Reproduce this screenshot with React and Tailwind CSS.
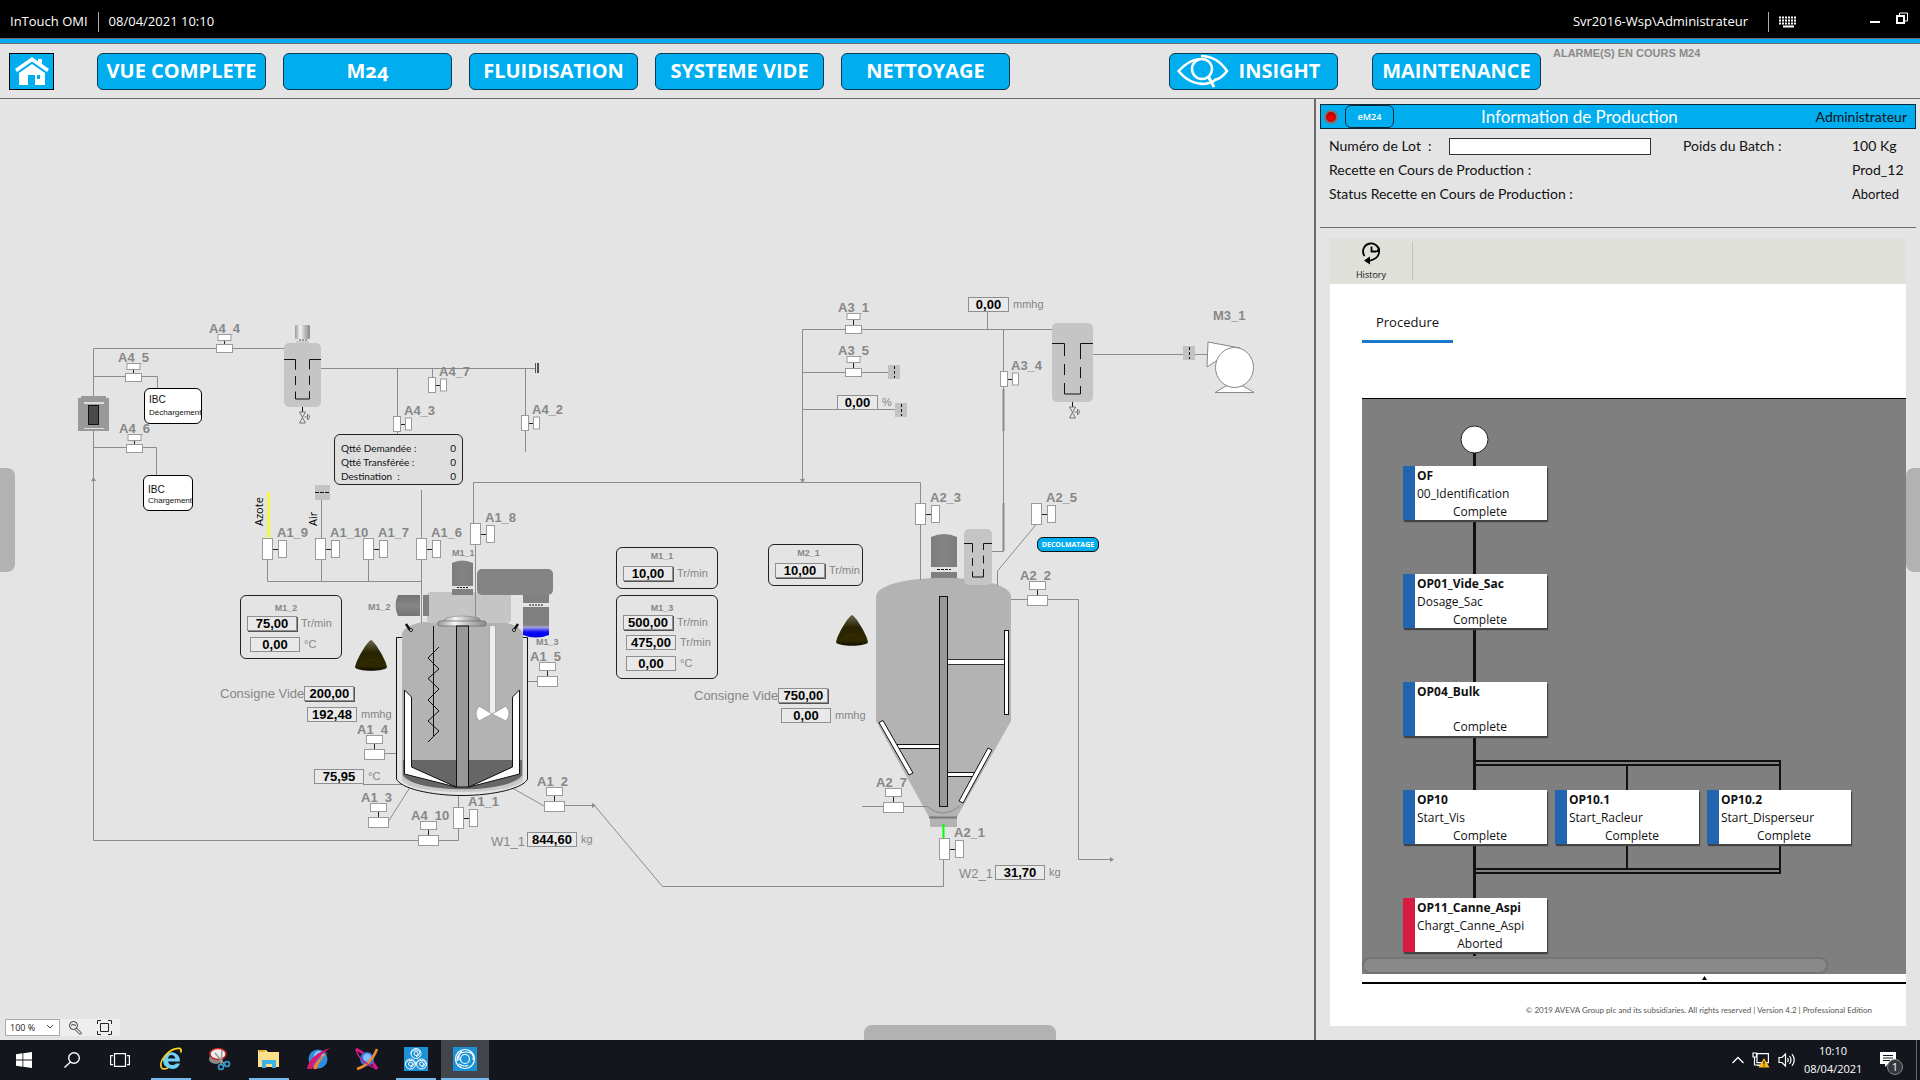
import React, { useState } from 'react';

const navItems = ['VUE COMPLETE', 'M24', 'FLUIDISATION', 'SYSTEME VIDE', 'NETTOYAGE'];

// Horizontal valves: body with the actuator above it
const topValves = [
  { tag: 'A4_4', x: 216, y: 344, small: true },
  { tag: 'A4_5', x: 125, y: 373, small: true },
  { tag: 'A4_6', x: 126, y: 444, small: true },
  { tag: 'A3_1', x: 845, y: 325, small: true, rise: 12 },
  { tag: 'A3_5', x: 845, y: 368, small: true, rise: 12 },
  { tag: 'A1_5', x: 537, y: 676 },
  { tag: 'A1_4', x: 364, y: 749 },
  { tag: 'A1_3', x: 368, y: 817 },
  { tag: 'A4_10', x: 418, y: 835 },
  { tag: 'A1_2', x: 544, y: 801 },
  { tag: 'A2_2', x: 1027, y: 595 },
  { tag: 'A2_7', x: 883, y: 802 },
];

// Vertical valves: body with the actuator on its right
const sideValves = [
  { tag: 'A4_7', x: 428, y: 377, small: true },
  { tag: 'A4_3', x: 393, y: 416, small: true },
  { tag: 'A4_2', x: 521, y: 415, small: true },
  { tag: 'A3_4', x: 1000, y: 371, small: true },
  { tag: 'A1_9', x: 262, y: 538 },
  { tag: 'A1_10', x: 315, y: 538 },
  { tag: 'A1_7', x: 363, y: 538 },
  { tag: 'A1_6', x: 416, y: 538 },
  { tag: 'A1_8', x: 470, y: 523 },
  { tag: 'A1_1', x: 453, y: 807 },
  { tag: 'A2_3', x: 915, y: 503 },
  { tag: 'A2_5', x: 1031, y: 503 },
  { tag: 'A2_1', x: 939, y: 838 },
];

const steps = [
  { id: 'OF', name: '00_Identification', status: 'Complete', pos: 'left-[41px] top-[67px]' },
  { id: 'OP01_Vide_Sac', name: 'Dosage_Sac', status: 'Complete', pos: 'left-[41px] top-[175px]' },
  { id: 'OP04_Bulk', name: '', status: 'Complete', pos: 'left-[41px] top-[283px]' },
  { id: 'OP10', name: 'Start_Vis', status: 'Complete', pos: 'left-[41px] top-[391px]' },
  { id: 'OP10.1', name: 'Start_Racleur', status: 'Complete', pos: 'left-[193px] top-[391px]' },
  { id: 'OP10.2', name: 'Start_Disperseur', status: 'Complete', pos: 'left-[345px] top-[391px]' },
  { id: 'OP11_Canne_Aspi', name: 'Chargt_Canne_Aspi', status: 'Aborted', pos: 'left-[41px] top-[499px]' },
];

const Tag = ({ x, y, size = 13, children }) => (
  <text x={x} y={y} fontSize={size} fontWeight="bold" fill="#878787">{children}</text>
);

const TopValve = ({ tag, x, y, small, rise }) => {
  const w = small ? 16 : 20;
  const h = small ? 8 : 10;
  const aw = small ? 13 : 16;
  const ah = small ? 6 : 8;
  const ay = y - (rise || (small ? 10 : 14));
  return (
    <g>
      <Tag x={x - 7} y={ay - 1}>{tag}</Tag>
      <g fill="#fff" stroke="#9a9a9a">
        <rect x={x + 0.5} y={y + 0.5} width={w} height={h} />
        <rect x={x + (w - aw) / 2 + 0.5} y={ay + 0.5} width={aw} height={ah} />
        <path d={`M${x + w / 2 + 0.5} ${ay + ah + 1}V${y}`} stroke="#222" />
      </g>
    </g>
  );
};

const SideValve = ({ tag, x, y, small }) => {
  const w = small ? 7 : 10;
  const h = small ? 15 : 21;
  const aw = small ? 6 : 8;
  const ah = small ? 12 : 17;
  const ax = small ? x + 12 : x + 16;
  return (
    <g>
      <Tag x={small ? x + 11 : x + 15} y={y - 1}>{tag}</Tag>
      <g fill="#fff" stroke="#9a9a9a">
        <rect x={x + 0.5} y={y + 0.5} width={w} height={h} />
        <rect x={ax + 0.5} y={y + (h - ah) / 2 + 0.5} width={aw} height={ah} />
        <path d={`M${x + w + 1} ${y + Math.round(h / 2) + 0.5}H${ax}`} stroke="#222" />
      </g>
    </g>
  );
};

// Filter housing with its dashed cartridge
const Filter = ({ x, y, w, h, top, inset }) => (
  <g>
    <rect x={x} y={y} width={w} height={h} rx="5" fill="#c5c5c5" />
    <path
      d={`M${x} ${y + top}H${x + inset}V${y + h - 8}H${x + w - inset}V${y + top}H${x + w}`}
      fill="none"
      stroke="#111"
      strokeDasharray={`${inset + h * 0.16} ${h * 0.1} ${h * 0.14} ${h * 0.1} ${h * 0.12 + w - inset * 2 + h * 0.12} ${h * 0.1} ${h * 0.14} ${h * 0.1} 100`}
    />
  </g>
);

const DrainValve = ({ x, y }) => (
  <g fill="none" stroke="#777">
    <path d={`M${x} ${y}v5`} stroke="#111" />
    <path d={`M${x - 3} ${y + 5}h6l-6 11h6l-6 -11M${x + 2} ${y + 10}h3`} />
    <path d={`M${x + 5} ${y + 7}q4 3 0 6z`} />
  </g>
);

const AlarmCone = ({ x, y }) => (
  <g transform={`translate(${x} ${y})`}>
    <path d="M16 0C20 2 30 18 32 27C31 32 1 32 0 27C2 18 12 2 16 0Z" fill="url(#cone)" />
    <path d="M8 23l8-4 8 4" fill="none" stroke="#554a10" strokeDasharray="1 2" />
  </g>
);

const Orifice = ({ x, y }) => (
  <g>
    <rect x={x} y={y} width="12" height="14" fill="#c2c2c2" />
    <path d={`M${x + 6.5} ${y + 1}v12`} stroke="#111" strokeDasharray="3 2" />
  </g>
);

const Pipes = () => (
  <g fill="none" stroke="#8c8c8c">
    <path d="M93.5 397V348.5H284M93.5 376.5H157.5V388M93.5 428V840.5H458.5V829M93.5 447.5H156.5V475" />
    <path d="M321 368.5H535M397.5 368V434M432.5 368V377M525.5 368V452M421.5 490V623M267.5 559V581.5H421.5M321.5 500V581M368.5 559V581" />
    <path d="M473.5 524V482.5H920.5V582M475.5 545V618" />
    <path d="M802.5 482V329.5H1053M802.5 372.5H890M802.5 409.5H897M987.5 312V329M1003.5 329V551.5H991M1091 354.5H1209" />
    <path d="M1036.5 524L997.5 571V586M1011 599.5H1078.5V859.5H1112M862 806.5H905" />
    <path d="M943.5 859V886.5H662.5L594.5 805.5H564M544 806L507 785M388 822L412 784M363 784.5H412M528 681.5H537M385 753.5H397M458.5 796V808" />
    <path d="M1003.5 389V431M1003.5 503V551" strokeWidth="2" />
    <path d="M268.5 492V538" stroke="#ffff00" strokeWidth="2" />
    <path d="M91 481l2.500-4 2.500 4zM800 479h5l-2.500 4zM592 803l4 2.500-4 2.500zM1110 857l4 2.500-4 2.500z" fill="#8c8c8c" stroke="none" />
  </g>
);

const MixerTank = () => (
  <g>
    {/* jacket */}
    <path d="M404 637.500H396.500V779C400 788 430 795.500 462 795.500C494 795.500 524 788 527.500 779V637.500H521" fill="#e4e4e4" stroke="#111" />
    <path d="M402 780V634C404 627 414 623 426 622H498C511 623 521 627 523 634V780C515 796 409 796 402 780Z" fill="#c9c9c9" />
    <path d="M402 776V634C404 627 414 623 426 622H498C511 623 521 627 523 634V776C510 793 414 793 402 776Z" fill="#b3b3b3" />
    <path d="M403 760H522V775C511 794 414 794 403 775Z" fill="#666" />
    {/* gearbox and motors */}
    <rect x="427" y="592" width="84" height="31" rx="4" fill="#c5c5c5" />
    <path d="M452 586V563Q462 558 473 563V586Z" fill="url(#motor)" />
    <path d="M452 589h21v6h-21zM423 595h6v21h-6zM523 595h26v8h-26z" fill="#808080" />
    <path d="M420 595H398Q393 605 398 616H420Z" fill="url(#motorSide)" />
    <rect x="477" y="569" width="76" height="26" rx="5" fill="#848484" />
    <path d="M523 607h26v28q-13 5-26 0z" fill="url(#blueMotor)" />
    <path d="M457 587.500h11M421.500 599v13M529 605h14" stroke="#111" strokeDasharray="2 1" />
    <path d="M421.500 590V623M475.500 560V618" stroke="#8c8c8c" fill="none" />
    {/* lid */}
    <path d="M446 618Q462 614 479 618L482 623H441Z" fill="url(#steel)" stroke="#777" strokeWidth=".5" />
    <rect x="438" y="621" width="48" height="5" rx="2" fill="url(#steel)" stroke="#666" strokeWidth=".7" />
    <path d="M406 624l4 6M518 624l-4 6" stroke="#111" strokeWidth="2.500" />
    <circle cx="411" cy="630" r="1.500" fill="#eee" stroke="#111" />
    <circle cx="514" cy="630" r="1.500" fill="#eee" stroke="#111" />
    {/* shafts, screw, disperser */}
    <path d="M433.500 626V737" stroke="#111" />
    <path d="M439 647L428 658L439 669L428 678.500L439 689L428 700L439 711L428 721L439 731L428 742" fill="none" stroke="#111" />
    <rect x="489.500" y="625.500" width="6" height="88" fill="#eee" stroke="#aaa" />
    <path d="M492 714L479 706Q473 714 479 721L492 714L506 706Q512 714 506 721Z" fill="#fff" stroke="#999" strokeWidth=".8" />
    <rect x="456.500" y="626" width="12" height="161" fill="#989898" stroke="#111" />
    {/* anchor blades */}
    <path d="M404.500 690L411.500 697V767L456 787L404.500 774ZM519.500 690L512.500 697V767L469 787L519.500 774Z" fill="#fff" stroke="#111" />
  </g>
);

const StorageTank = () => (
  <g>
    <path d="M931 567V537Q944 531 957 537V567Z" fill="url(#motor)" />
    <rect x="931" y="572" width="26" height="8" fill="#808080" />
    <path d="M937 569.500h14" stroke="#111" strokeDasharray="3 1" />
    <path d="M876 721V596C878 585 905 578 944 578C983 578 1009 585 1011 596V721L957 817H929Z" fill="#b3b3b3" />
    <rect x="930" y="817" width="27" height="10" fill="#b3b3b3" />
    <path d="M929 817.500h28" stroke="#777" strokeWidth="2" />
    <path d="M905 806.500H927Q943 820 960 806" fill="none" stroke="#8c8c8c" />
    <path d="M997.500 571V586M920.500 565V580" stroke="#8c8c8c" />
    <Filter x={964} y={529} w={28} h={56} top={14.500} inset={8.500} />
    <rect x="947.500" y="659.500" width="57" height="5" fill="#fff" stroke="#333" />
    <rect x="1004.500" y="630.500" width="4" height="84" fill="#fff" stroke="#111" />
    <rect x="897.500" y="744.500" width="43" height="4" fill="#fff" stroke="#111" />
    <rect x="947.500" y="772.500" width="27" height="4" fill="#fff" stroke="#111" />
    <path d="M879 722.500L883 720.500L913 773L909 775ZM988 748L992 750L963 803L959 801Z" fill="#fff" stroke="#111" />
    <rect x="939.500" y="596.500" width="8" height="210" fill="#999" stroke="#111" />
    <path d="M943.500 824V838" stroke="#00ff00" strokeWidth="2" />
  </g>
);

const Drawing = () => (
  <svg viewBox="0 99 1280 820" className="block h-[820px] w-[1280px] font-['Liberation_Sans',Arial,sans-serif]">
    <defs>
      <linearGradient id="motor">
        <stop offset="0" stopColor="#7c7c7c" />
        <stop offset=".5" stopColor="#848484" />
        <stop offset="1" stopColor="#7c7c7c" />
      </linearGradient>
      <linearGradient id="motorSide" x2="0" y2="1">
        <stop offset="0" stopColor="#747474" />
        <stop offset=".5" stopColor="#858585" />
        <stop offset="1" stopColor="#747474" />
      </linearGradient>
      <linearGradient id="blueMotor" x2="0" y2="1">
        <stop offset=".6" stopColor="#808080" />
        <stop offset=".66" stopColor="#a8a8e0" />
        <stop offset=".82" stopColor="#0a0aff" />
        <stop offset="1" stopColor="#0000e0" />
      </linearGradient>
      <linearGradient id="steel">
        <stop offset="0" stopColor="#9a9a9a" />
        <stop offset=".35" stopColor="#f4f4f4" />
        <stop offset=".6" stopColor="#c4c4c4" />
        <stop offset="1" stopColor="#8a8a8a" />
      </linearGradient>
      <linearGradient id="cone" x2="0" y2="1">
        <stop offset="0" stopColor="#6b6550" />
        <stop offset=".4" stopColor="#2a2402" />
        <stop offset=".85" stopColor="#2f2800" />
        <stop offset="1" stopColor="#0d0b00" />
      </linearGradient>
    </defs>

    <Pipes />
    <MixerTank />
    <StorageTank />

    {/* bag loading station */}
    <path d="M78 398h3v-2h25v2h3v33H78z" fill="#999" />
    <path d="M84 402h20v2H84zM84 428h20v1H84z" fill="#ddd" />
    <rect x="88.500" y="405.500" width="10" height="19" fill="#4a4a4a" stroke="#111" />

    <rect x="295" y="325" width="15" height="14" rx="1" fill="url(#steel)" />
    <rect x="296" y="341" width="13" height="3" fill="#ccc" />
    <path d="M299 340h8" stroke="#555" strokeDasharray="2 1" />
    <Filter x={284} y={343} w={37} h={64} top={16.500} inset={11.500} />
    <DrainValve x={302.500} y={407} />
    <Filter x={1052} y={323} w={41} h={79} top={20.500} inset={12.500} />
    <DrainValve x={1072.500} y={402} />
    <path d="M535 363h1v10h-1zM537 363h2v10h-2z" fill="#555" />

    <rect x="315" y="485" width="15" height="15" fill="#c2c2c2" />
    <path d="M315 492.500h15" stroke="#111" strokeDasharray="4 1" />
    <Orifice x={888} y={365} />
    <Orifice x={895} y={403} />
    <Orifice x={1183} y={346} />

    {/* vacuum pump */}
    <path d="M1208 342L1240 348L1216 361L1207 367Z" fill="#fff" stroke="#888" />
    <path d="M1215 392.500L1226 386H1243L1254 392.500Z" fill="#fff" stroke="#888" />
    <ellipse cx="1234.500" cy="367.500" rx="19" ry="20" fill="#fff" stroke="#888" />

    <AlarmCone x={355} y={640} />
    <AlarmCone x={836} y={615} />

    {topValves.map((valve) => (
      <TopValve key={valve.tag} {...valve} />
    ))}
    {sideValves.map((valve) => (
      <SideValve key={valve.tag} {...valve} />
    ))}

    <Tag x={1213} y={320}>M3_1</Tag>
    <Tag x={452} y={556} size={9}>M1_1</Tag>
    <Tag x={368} y={610} size={9}>M1_2</Tag>
    <Tag x={536} y={645} size={9}>M1_3</Tag>
    <text x="525" y="846" textAnchor="end" fontSize="13" fill="#878787">W1_1</text>
    <text x="993" y="878" textAnchor="end" fontSize="13" fill="#878787">W2_1</text>
    <text transform="translate(263 526) rotate(-90)" fontSize="11" fontFamily="Open Sans, sans-serif">Azote</text>
    <text transform="translate(317 526) rotate(-90)" fontSize="11" fontFamily="Open Sans, sans-serif">Air</text>
  </svg>
);

const unitClass = 'text-[11px] leading-none text-[#858585]';

// Read-only measurement
const Reading = ({ value, unit, width = 'w-[50px]' }) => (
  <div className="flex items-center gap-1">
    <output className={`${width} h-[15px] border border-[#8f8f8f] bg-[#e9e9e9] text-center text-[13px] leading-[13px] font-bold text-black`}>
      {value}
    </output>
    <span className={unitClass}>{unit}</span>
  </div>
);

// Operator set point
const Setpoint = ({ label, initial, unit }) => {
  const [value, setValue] = useState(initial);
  return (
    <div className="flex items-center gap-1">
      <input
        aria-label={label}
        value={value}
        onChange={(e) => setValue(e.target.value)}
        className="h-[15px] w-[50px] border border-[#8f8f8f] bg-[#e9e9e9] text-center text-[13px] leading-[13px] font-bold text-black shadow-[1px_1px_0_#555]"
      />
      {unit && <span className={unitClass}>{unit}</span>}
    </div>
  );
};

const Panel = ({ title, className, children }) => (
  <section className={`absolute flex flex-col rounded-md border border-[#222] ${className}`}>
    <h3 className="text-center text-[9px] leading-3 font-bold text-[#878787]">{title}</h3>
    {children}
  </section>
);

const Synoptic = () => {
  const [zoom, setZoom] = useState('100 %');
  return (
    <main className="relative min-w-0 flex-1 overflow-hidden border-r-2 border-[#6c6b70] font-['Liberation_Sans',Arial,sans-serif]">
      <Drawing />

      <button className="absolute top-[289px] left-[144px] h-9 w-[58px] rounded-md border border-black bg-white pl-1 text-left text-[8px] leading-[13px]">
        <span className="block text-[10px]">IBC</span>
        Déchargement
      </button>
      <button className="absolute top-[376px] left-[143px] h-9 w-[50px] rounded-md border border-black bg-white pl-1 text-left text-[8px] leading-[11px]">
        <span className="block pt-1 text-[10px]">IBC</span>
        Chargement
      </button>

      <dl className="absolute top-[335px] left-[334px] grid h-[51px] w-[129px] grid-cols-[1fr_auto] content-center rounded-md border border-[#222] bg-[#dfdfdf] px-1.5 pt-1 font-['Lato',sans-serif] text-[10px] leading-[14px]">
        <dt>Qtté Demandée :</dt>
        <dd>0</dd>
        <dt>Qtté Transférée :</dt>
        <dd>0</dd>
        <dt>Destination &nbsp;:</dt>
        <dd>0</dd>
      </dl>

      <Panel title="M1_2" className="top-[496px] left-[240px] h-16 w-[102px] gap-[6px] pt-1.5 pl-1.5 [&>h3]:-mb-1 [&>h3]:pr-4">
        <Setpoint label="M1_2 Tr/min" initial="75,00" unit="Tr/min" />
        <div className="pl-[3px]"><Reading value="0,00" unit="°C" /></div>
      </Panel>
      <Panel title="M1_1" className="top-[448px] left-[616px] h-[42px] w-[102px] gap-1 pt-0.5 pl-1.5 [&>h3]:pr-4">
        <Setpoint label="M1_1 Tr/min" initial="10,00" unit="Tr/min" />
      </Panel>
      <Panel title="M1_3" className="top-[496px] left-[616px] h-[84px] w-[102px] gap-[5px] pt-1.5 pl-1.5 [&>h3]:-mb-1 [&>h3]:pr-4">
        <Setpoint label="M1_3 Tr/min" initial="500,00" unit="Tr/min" />
        <div className="flex flex-col gap-[6px] pl-[3px]">
          <Reading value="475,00" unit="Tr/min" />
          <Reading value="0,00" unit="°C" />
        </div>
      </Panel>
      <Panel title="M2_1" className="top-[445px] left-[768px] h-[42px] w-[95px] gap-1 pt-0.5 pl-1.5 [&>h3]:pr-5">
        <Setpoint label="M2_1 Tr/min" initial="10,00" unit="Tr/min" />
      </Panel>

      <div className="absolute top-[587px] left-[220px] flex items-center">
        <span className="text-[13px] leading-[15px] text-[#878787]">Consigne Vide</span>
        <Setpoint label="Consigne Vide" initial="200,00" />
      </div>
      <div className="absolute top-[608px] left-[307px]"><Reading value="192,48" unit="mmhg" /></div>
      <div className="absolute top-[670px] left-[314px]"><Reading value="75,95" unit="°C" /></div>
      <div className="absolute top-[733px] left-[527px]"><Reading value="844,60" unit="kg" /></div>
      <div className="absolute top-[589px] left-[694px] flex items-center">
        <span className="text-[13px] leading-[15px] text-[#878787]">Consigne Vide</span>
        <Setpoint label="Consigne Vide" initial="750,00" />
      </div>
      <div className="absolute top-[609px] left-[781px]"><Reading value="0,00" unit="mmhg" /></div>
      <div className="absolute top-[766px] left-[995px]"><Reading value="31,70" unit="kg" /></div>
      <div className="absolute top-[198px] left-[968px]"><Reading value="0,00" unit="mmhg" width="w-[41px]" /></div>
      <div className="absolute top-[296px] left-[837px]"><Reading value="0,00" unit="%" width="w-[41px]" /></div>

      <button className="absolute top-[438px] left-[1037px] h-[15px] w-[62px] rounded-md border border-[#111] bg-[#00adef] font-['Open_Sans',sans-serif] text-[7px] leading-none font-bold text-white">
        DECOLMATAGE
      </button>

      <div className="absolute top-[369px] left-0 h-[104px] w-[15px] rounded-r-lg bg-[#b2b2b2]" />
      <div className="absolute bottom-0 left-[864px] h-[15px] w-48 rounded-t-lg bg-[#b2b2b2]" />

      <div className="absolute bottom-1 left-[5px] flex h-[17px] items-center bg-[#eee] font-['Open_Sans',sans-serif]">
        <div className="relative">
          <select
            aria-label="Zoom"
            value={zoom}
            onChange={(e) => setZoom(e.target.value)}
            className="block h-[17px] w-[55px] appearance-none border border-[#aaa] bg-white pl-1 text-[9px] text-[#222]"
          >
            <option>50 %</option>
            <option>100 %</option>
            <option>200 %</option>
          </select>
          <svg viewBox="0 0 8 6" className="pointer-events-none absolute top-[5px] right-1.5 h-1.5 w-2 fill-none stroke-[#444]">
            <path d="M1 1l3 3 3-3" />
          </svg>
        </div>
        <button aria-label="Loupe" className="ml-2">
          <svg viewBox="0 0 15 15" className="h-[15px] w-[15px] fill-none stroke-[#333]">
            <circle cx="5.500" cy="5.500" r="4" />
            <path d="M8.500 8l5 5-1.500 1.500-5-5M3 5.500q1-2 5 0" />
          </svg>
        </button>
        <button aria-label="Ajuster" className="mr-2 ml-3.5">
          <svg viewBox="0 0 15 15" className="h-[15px] w-[15px] fill-none stroke-[#222]">
            <path d="M.5 4V.5H4M11 .5h3.500V4M14.500 11v3.500H11M4 14.500H.5V11M3.500 3.500h8v8h-8z" />
          </svg>
        </button>
      </div>
    </main>
  );
};

const StepNode = ({ step }) => (
  <div className={`absolute flex h-[54px] w-36 bg-white shadow-[1px_2px_1px_#444] ${step.pos}`}>
    <div className={step.status === 'Aborted' ? 'w-3 bg-[#d81b43]' : 'w-3 bg-[#2165b1]'} />
    <div className="flex flex-1 flex-col pt-px pl-0.5 text-[12px] leading-[18px] whitespace-nowrap">
      <p className="h-[18px] font-bold">{step.id}</p>
      <p className="h-[18px]">{step.name}</p>
      <p className="h-[18px] pr-1 text-center">{step.status}</p>
    </div>
  </div>
);

const ProcedureChart = () => (
  <div className="relative h-[576px] overflow-hidden border-t border-black bg-[#7f7f7f]">
    <svg viewBox="0 0 544 576" className="absolute top-0 left-0 h-[576px] w-[544px]">
      <g fill="none" stroke="#111" strokeWidth="2">
        <path d="M112.500 50V557" strokeWidth="3" />
        <path d="M112 362H418V474H112M112 366H418M112 470H418M265 366V470" />
      </g>
      <circle cx="112.500" cy="40.500" r="13.500" fill="#fff" stroke="#222" />
    </svg>
    {steps.map((step) => (
      <StepNode key={step.id} step={step} />
    ))}
    <div className="absolute bottom-0 left-0 h-[17px] w-[466px] rounded-lg border-2 border-[#747474] bg-[#898989]" />
  </div>
);

const Production = () => (
  <aside className="relative flex w-[604px] shrink-0 flex-col px-1 pt-[5px] pb-3.5 font-['Lato',sans-serif]">
    <div className="flex h-[25px] items-stretch border border-[#0a2a3a] bg-[#00adef]">
      <div className="flex w-6 items-center pl-[3px]">
        <span className="h-3.5 w-3.5 rounded-full border-2 border-[#777] bg-[radial-gradient(circle_at_50%_65%,#f00,#900)]" />
      </div>
      <button className="w-[49px] rounded-md border border-[#0a2a3a] font-['Open_Sans',sans-serif] text-[9px] leading-none font-semibold text-white">eM24</button>
      <h2 className="flex-1 pl-[87px] text-[17px] leading-[23px] text-white">Information de Production</h2>
      <span className="pr-2 text-[14px] leading-[24px]">Administrateur</span>
    </div>

    <div className="flex flex-col gap-1.5 border-b border-[#6c6b70] px-[9px] pt-2 pb-6 text-[14px] leading-[18px]">
      <div className="flex items-center">
        <label htmlFor="lot" className="w-[120px]">Numéro de Lot &nbsp;:</label>
        <input id="lot" className="h-[17px] w-[202px] border border-[#333] bg-white px-1" />
        <span className="ml-8 flex-1">Poids du Batch :</span>
        <span className="w-[55px]">100 Kg</span>
      </div>
      <div className="flex justify-between">
        <span>Recette en Cours de Production :</span>
        <span className="w-[55px]">Prod_12</span>
      </div>
      <div className="flex justify-between">
        <span>Status Recette en Cours de Production :</span>
        <span className="w-[55px] text-[13px]">Aborted</span>
      </div>
    </div>

    <div className="mx-2.5 mt-2.5 flex flex-1 flex-col bg-white font-['Open_Sans',sans-serif]">
      <div className="flex h-[46px] bg-[#dfe0da] py-1">
        <button className="w-[83px] border-r border-[#c4c5c0] text-[9px] leading-3">
          <svg viewBox="0 0 20 23" className="mx-auto mb-1 h-[23px] w-5 fill-none stroke-black" strokeWidth="1.800">
            <path d="M3.500 14A8 8 0 1 1 17.500 12.500Q16 17 8 19" />
            <path d="M10.500 4.500V9.500h5" />
            <path d="M18.500 5v5h-4z" className="fill-black stroke-none" />
            <path d="M3 18.500l6-4v8z" className="fill-black stroke-none" />
          </svg>
          History
        </button>
      </div>
      <div className="flex flex-1 flex-col pt-[22px] pl-8">
        <button className="h-[37px] w-[91px] border-b-[3px] border-[#1a77c9] text-[13px]">Procedure</button>
        <div className="mt-[55px]"><ProcedureChart /></div>
        <div className="flex h-2.5 justify-center border-b-2 border-black pl-[140px]">
          <svg viewBox="0 0 5 4" className="mt-0.5 h-1 w-[5px]"><path d="M0 4L2.500 0 5 4z" /></svg>
        </div>
        <p className="pt-5 pr-[34px] text-right font-['Lato',sans-serif] text-[8px] text-[#555]">
          © 2019 AVEVA Group plc and its subsidiaries. All rights reserved | Version 4.2 | Professional Edition
        </p>
      </div>
    </div>
    <div className="absolute top-[369px] right-0 h-[104px] w-3.5 rounded-l-lg bg-[#b2b2b2]" />
  </aside>
);

const Header = () => (
  <header>
    <div className="flex h-[38px] items-center bg-black pt-1.5 pl-2.5 text-[13px] text-white">
      <span className="border-r border-[#aaa] pr-2.5">InTouch OMI</span>
      <span className="flex-1 pl-2.5">08/04/2021 10:10</span>
      <span className="pr-5">Svr2016-Wsp\Administrateur</span>
      <span className="h-5 border-l border-[#aaa] pt-1 pl-2.5">
        <svg viewBox="0 0 18 12" className="h-3 w-[18px] stroke-white">
          <path d="M0 1.500h18M0 4.500h18M0 7.500h18" strokeWidth="2" strokeDasharray="2 1" />
          <path d="M4 10.500h11" strokeWidth="2" />
        </svg>
      </span>
      <button aria-label="Réduire" className="ml-[73px] h-0.5 w-2.5 bg-white" />
      <button aria-label="Restaurer" className="mr-3 mb-2 ml-4">
        <svg viewBox="0 0 12 12" className="h-3 w-3 fill-none stroke-white">
          <path d="M1 4h7v7H1z" strokeWidth="2" />
          <path d="M3.500 3V1h8v8H9" />
        </svg>
      </button>
    </div>
    <div className="h-1.5 border-t border-b border-[#6c6b70] bg-[#00adef]" />
    <nav className="flex h-[55px] items-center border-b border-[#6c6b70] pl-[9px]">
      <button aria-label="Accueil" className="mr-[43px] h-[37px] w-[45px] border border-black bg-[#00adef]">
        <svg viewBox="0 0 34 28" className="mx-auto h-7 w-[34px] fill-white">
          <path d="M17 0L0 12l2 3L17 4.500 32 15l2-3-7-5V2h-4v2.500z" />
          <path d="M17 7L4 16v12h9V18h7v10h10V16zM22 18h3v4h-3z" fillRule="evenodd" />
        </svg>
      </button>
      <div className="flex gap-[17px]">
        {navItems.map((item) => (
          <button
            key={item}
            className="h-[37px] w-[169px] rounded-md border border-[#0b3b52] bg-[#00adef] text-[20px] leading-none font-bold whitespace-nowrap text-white oldstyle-nums"
          >
            {item}
          </button>
        ))}
      </div>
      <div className="ml-[159px] flex gap-[34px]">
        <button className="flex h-[37px] w-[169px] items-center justify-center gap-2.5 rounded-md border border-[#0b3b52] bg-[#00adef] pr-2.5 text-[20px] leading-none font-bold text-white">
          <svg viewBox="0 0 52 34" className="h-[34px] w-[52px] fill-none stroke-white" strokeWidth="2.500">
            <path d="M22 5Q12 6 1.500 17Q12 30 27 30Q36 29 39 25" />
            <path d="M24 2Q40 2 50 17Q45 24 38 26" />
            <ellipse cx="25" cy="15" rx="10" ry="10" />
            <path d="M31 22l6 11" strokeWidth="3" />
          </svg>
          INSIGHT
        </button>
        <button className="h-[37px] w-[169px] rounded-md border border-[#0b3b52] bg-[#00adef] text-[20px] leading-none font-bold text-white">
          MAINTENANCE
        </button>
      </div>
      <span className="ml-3 self-start pt-[3px] font-['Liberation_Sans',Arial,sans-serif] text-[11px] leading-3 font-bold whitespace-nowrap text-[#8a8a8a]">
        ALARME(S) EN COURS M24
      </span>
    </nav>
  </header>
);

const Swirl = ({ cx, cy, r }) => (
  <g>
    <circle cx={cx} cy={cy} r={r} />
    <circle cx={cx} cy={cy} r={r * 0.4} />
    <path d={`M${cx - r} ${cy}q0 ${-r * 0.7} ${r} ${-r * 0.7}t${r * 0.7} ${r * 0.7}t${-r * 0.7} ${r * 0.6}`} />
  </g>
);

const taskApps = [
  {
    name: 'Internet Explorer',
    open: true,
    icon: (
      <>
        <path d="M4 13a8.500 8.500 0 1 1 17 1.500H9q1 3.500 4 3.500t4-1.500h4q-2 5.500-8 5.500-9-1-9-9zm5-1.500h7.500q-1-3.500-4-3.500T9 11.500z" fill="#6fd0f5" />
        <path d="M3 21.500C-2 15 11 0 21 1.500q2 1 .5 4M3 21.500q2 1 6-.5" fill="none" stroke="#fbd020" strokeWidth="1.800" />
      </>
    ),
  },
  {
    name: 'Outil Capture',
    icon: (
      <>
        <ellipse cx="8" cy="12" rx="7" ry="5" fill="#8a8a8a" />
        <ellipse cx="10" cy="7" rx="8" ry="5.500" fill="#eee" stroke="#c22" strokeWidth="1.500" />
        <path d="M7 6l10 12M14 3l-1 15" stroke="#999" strokeWidth="1.500" />
        <circle cx="19" cy="17" r="2.500" fill="none" stroke="#3b9fd8" strokeWidth="1.500" />
        <circle cx="13" cy="20" r="2.500" fill="none" stroke="#3b9fd8" strokeWidth="1.500" />
      </>
    ),
  },
  {
    name: 'Explorateur',
    open: true,
    icon: (
      <>
        <path d="M1 3h8l2 2h11v15H1z" fill="#fce08a" />
        <path d="M2 3h6v2H2z" fill="#e8b230" />
        <path d="M5 21v-8h14v8h-4v-4H9v4z" fill="#3eb3e8" />
      </>
    ),
  },
  {
    name: 'System Platform IDE',
    icon: (
      <>
        <circle cx="12" cy="12" r="9.500" fill="#2c8fe0" />
        <path d="M10 5q6-3 9 4-7-1-12 6 0-7 3-10z" fill="#8fd0ff" />
        <path d="M1 22Q3 8 24 1 9 12 6 22z" fill="#d61a72" />
        <path d="M7 22Q9 13 22 5 12 15 11 22z" fill="#f08030" />
      </>
    ),
  },
  {
    name: 'Object Viewer',
    icon: (
      <>
        <path d="M1 2Q14 8 22 22" fill="none" stroke="#d61a8a" strokeWidth="3" />
        <circle cx="12" cy="12" r="7" fill="#2f6fd8" />
        <circle cx="12" cy="10.500" r="4" fill="#7dbcff" />
        <path d="M2 22Q16 18 22 2" fill="none" stroke="#f08a30" strokeWidth="2.500" />
        <path d="M1 2Q3 14 22 22" fill="none" stroke="#d61a8a" strokeWidth="1.500" />
      </>
    ),
  },
  {
    name: 'InTouch',
    open: true,
    icon: (
      <>
        <path d="M0 0h24v24H0z" fill="#1c92d6" />
        <g fill="none" stroke="#fff" strokeWidth="1">
          <Swirl cx={12} cy={6.500} r={5} />
          <Swirl cx={6.500} cy={17} r={5} />
          <Swirl cx={17.500} cy={17} r={5} />
        </g>
      </>
    ),
  },
  {
    name: 'InTouch OMI',
    open: true,
    active: true,
    icon: (
      <>
        <path d="M0 0h24v24H0z" fill="#1c92d6" />
        <g fill="none" stroke="#fff" strokeWidth="1.200">
          <circle cx="12" cy="12" r="9.500" />
          <circle cx="12" cy="12" r="4.500" />
          <path d="M4 14Q4 5 13 5t7 8M6 17q4 3 9 1.500M9 4.500q-4 2-3 9" />
        </g>
      </>
    ),
  },
];

const Taskbar = () => (
  <footer className="flex h-10 items-stretch bg-[#13161d] text-white">
    <button aria-label="Démarrer" className="w-12">
      <svg viewBox="0 0 16 16" className="mx-auto h-4 w-4 fill-white">
        <path d="M0 2.300L6.500 1.300V7.600H0zM7.300 1.200L16 0v7.600H7.300zM0 8.400h6.500v6.300L0 13.700zM7.300 8.400H16V16l-8.700-1.200z" />
      </svg>
    </button>
    <button aria-label="Rechercher" className="w-12">
      <svg viewBox="0 0 16 16" className="mx-auto h-4 w-4 fill-none stroke-white" strokeWidth="1.400">
        <circle cx="10" cy="6" r="5.300" />
        <path d="M6.500 10L.5 15.500" />
      </svg>
    </button>
    <button aria-label="Vue des tâches" className="mr-[3px] w-12">
      <svg viewBox="0 0 20 14" className="mx-auto h-3.5 w-5 fill-none stroke-white" strokeWidth="1.200">
        <path d="M4.500 .6h11v12.800h-11zM3 2.600H.6v9H3M17 2.600h2.400v9H17" />
      </svg>
    </button>
    {taskApps.map((app) => (
      <button
        key={app.name}
        aria-label={app.name}
        className={app.active ? 'w-12 bg-[#41454c]' : 'mr-px flex w-12 justify-center'}
      >
        <span
          className={
            app.active
              ? 'flex h-10 items-center justify-center border-b-2 border-[#76b9ed]'
              : app.open
              ? 'flex h-10 w-10 items-center justify-center border-b-2 border-[#76b9ed]'
              : 'flex h-10 w-10 items-center justify-center border-b-2 border-transparent'
          }
        >
          <svg viewBox="0 0 24 24" className="h-6 w-6">{app.icon}</svg>
        </span>
      </button>
    ))}
    <div className="flex flex-1 items-center justify-end gap-2">
      <svg viewBox="0 0 12 8" className="h-2 w-3 fill-none stroke-white" strokeWidth="1.300">
        <path d="M.5 7L6 1.500 11.500 7" />
      </svg>
      <svg viewBox="0 0 18 16" className="h-4 w-[18px] fill-none stroke-white" strokeWidth="1.200">
        <path d="M5 1.600h11.400v9H5zM1 1h3.500v4H1zM2.500 5v8H9M5 13.500h6" />
        <path d="M12 6l5.500 9.500h-11z" fill="#fdb913" stroke="none" />
        <path d="M12 9v3.500M12 13.500v1" stroke="#222" />
      </svg>
      <svg viewBox="0 0 18 14" className="h-3.5 w-[18px] fill-none stroke-white" strokeWidth="1.200">
        <path d="M1 4.500h3L7.500 1v12L4 9.500H1zM9.500 5q1.500 2 0 4M11.500 3q3 4 0 8M14 1.200q4.500 5.800 0 11.600" />
      </svg>
      <div className="w-[58px] text-center text-[11px] leading-[18px]">
        <p>10:10</p>
        <p>08/04/2021</p>
      </div>
      <button aria-label="Notifications" className="relative ml-2.5 w-7">
        <svg viewBox="0 0 16 16" className="h-4 w-4 fill-white">
          <path d="M0 0h16v12H8l-3 3v-3H0z" />
          <path d="M3 3.500h10M3 6h10M3 8.500h7" stroke="#13161d" />
        </svg>
        <span className="absolute top-[7px] left-[7px] h-4 w-4 rounded-full border border-[#888] bg-[#33363c] text-[11px] leading-[14px]">1</span>
      </button>
      <span className="h-full w-1 border-l border-[#666]" />
    </div>
  </footer>
);

const App = () => (
  <div className="flex min-h-screen flex-col bg-[#e4e4e4] font-['Open_Sans','Noto_Sans',sans-serif] text-[#111]">
    <Header />
    <div className="flex flex-1">
      <Synoptic />
      <Production />
    </div>
    <Taskbar />
  </div>
);

export default App;
